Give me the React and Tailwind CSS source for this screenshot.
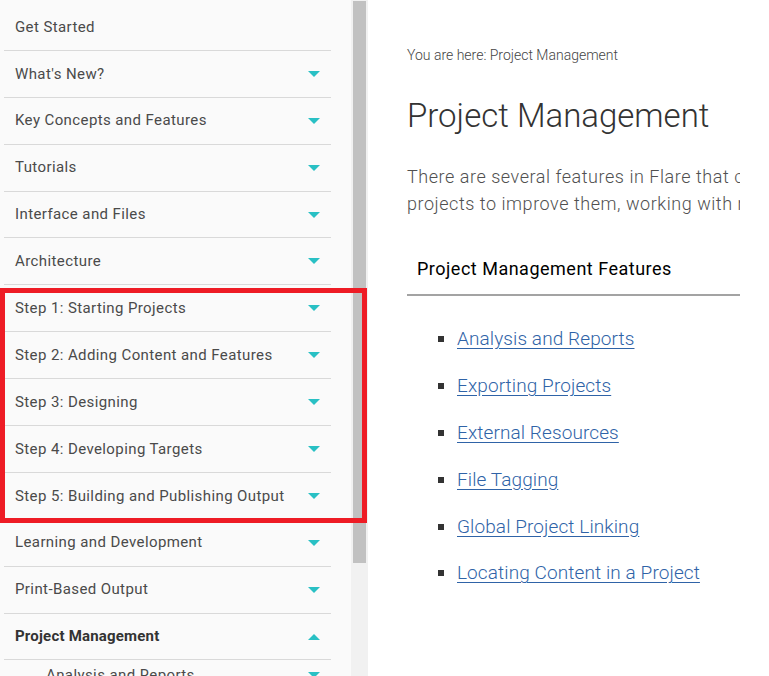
import React from "react";

const items = [
  { label: "Get Started", arrow: false },
  { label: "What's New?", arrow: true },
  { label: "Key Concepts and Features", arrow: true },
  { label: "Tutorials", arrow: true },
  { label: "Interface and Files", arrow: true },
  { label: "Architecture", arrow: true },
  { label: "Step 1: Starting Projects", arrow: true },
  { label: "Step 2: Adding Content and Features", arrow: true },
  { label: "Step 3: Designing", arrow: true },
  { label: "Step 4: Developing Targets", arrow: true },
  { label: "Step 5: Building and Publishing Output", arrow: true },
  { label: "Learning and Development", arrow: true },
  { label: "Print-Based Output", arrow: true },
];

const links = [
  "Analysis and Reports",
  "Exporting Projects",
  "External Resources",
  "File Tagging",
  "Global Project Linking",
  "Locating Content in a Project",
];

function Down() {
  return (
    <span className="block w-0 h-0 border-l-[6px] border-r-[6px] border-t-[6px] border-l-transparent border-r-transparent border-t-[#29c0c4]" />
  );
}
function Up() {
  return (
    <span className="block w-0 h-0 border-l-[6px] border-r-[6px] border-b-[6px] border-l-transparent border-r-transparent border-b-[#29c0c4]" />
  );
}

export default function App() {
  return (
    <div
      className="relative flex h-[676px] w-[769px] overflow-hidden bg-white"
      style={{ fontFamily: "Roboto, 'Liberation Sans', sans-serif" }}
    >
      {/* Sidebar */}
      <div className="w-[351px] shrink-0 bg-[#fafafa] pt-1">
        {items.map((it) => (
          <div
            key={it.label}
            className="ml-1 w-[327px] h-[46.9px] border-b border-[#d9d9d9] flex items-center justify-between pl-[11px] pr-[11px] text-[15px] tracking-[0.4px] text-[#4a4a4a]"
          >
            <span>{it.label}</span>
            {it.arrow && <Down />}
          </div>
        ))}
        <div className="ml-1 w-[327px] h-[46.9px] border-b border-[#d9d9d9] flex items-center justify-between pl-[11px] pr-[11px] text-[15px] tracking-[0.2px] font-bold text-[#333]">
          <span>Project Management</span>
          <Up />
        </div>
        <div className="ml-1 w-[327px] h-[30px] flex items-center justify-between pl-[42px] pr-[11px] text-[15px] tracking-[0.4px] text-[#4a4a4a]">
          <span>Analysis and Reports</span>
          <Down />
        </div>
      </div>

      {/* Scrollbar */}
      <div className="w-[17px] shrink-0 bg-[#f1f1f1] flex justify-center pt-px">
        <div className="w-[13px] h-[562px] bg-[#c1c1c1]" />
      </div>

      {/* Main */}
      <div className="flex-1 min-w-0">
        <div className="w-[372px] overflow-hidden pl-[39px] pt-[46px]">
          <div className="w-[333px]">
            <div className="text-[14px] font-light text-[#444] whitespace-nowrap leading-[18px]">
              You are here: Project Management
            </div>
            <h1 className="mt-[32px] text-[33px] font-light text-[#333] leading-[40px] whitespace-nowrap">
              Project Management
            </h1>
            <p className="mt-[27px] text-[18px] font-light tracking-[0.54px] text-[#505050] leading-[27px] whitespace-nowrap">
              There are several features in Flare that can help you manage
              <br />
              projects to improve them, working with multiple authors, and more.
            </p>
            <div className="mt-[40px] border-b-2 border-[#a3a3a3] pl-[10px] pb-[13px] text-[18px] tracking-[0.5px] text-black leading-[24px] whitespace-nowrap">
              Project Management Features
            </div>
            <ul className="mt-[20px] pl-[31px]">
              {links.map((l) => (
                <li key={l} className="flex items-center h-[46.8px]">
                  <span className="w-[6px] h-[6px] bg-[#333] mr-[13px]" />
                  <a
                    href="#"
                    className="text-[19px] font-light tracking-[0.1px] text-[#2f63a7] underline underline-offset-[3px] whitespace-nowrap leading-[24px]"
                  >
                    {l}
                  </a>
                </li>
              ))}
            </ul>
          </div>
        </div>
      </div>

      {/* Red annotation box */}
      <div className="absolute left-0 top-[288px] w-[367px] h-[235px] border-[5px] border-[#ee1c25] pointer-events-none" />
    </div>
  );
}
